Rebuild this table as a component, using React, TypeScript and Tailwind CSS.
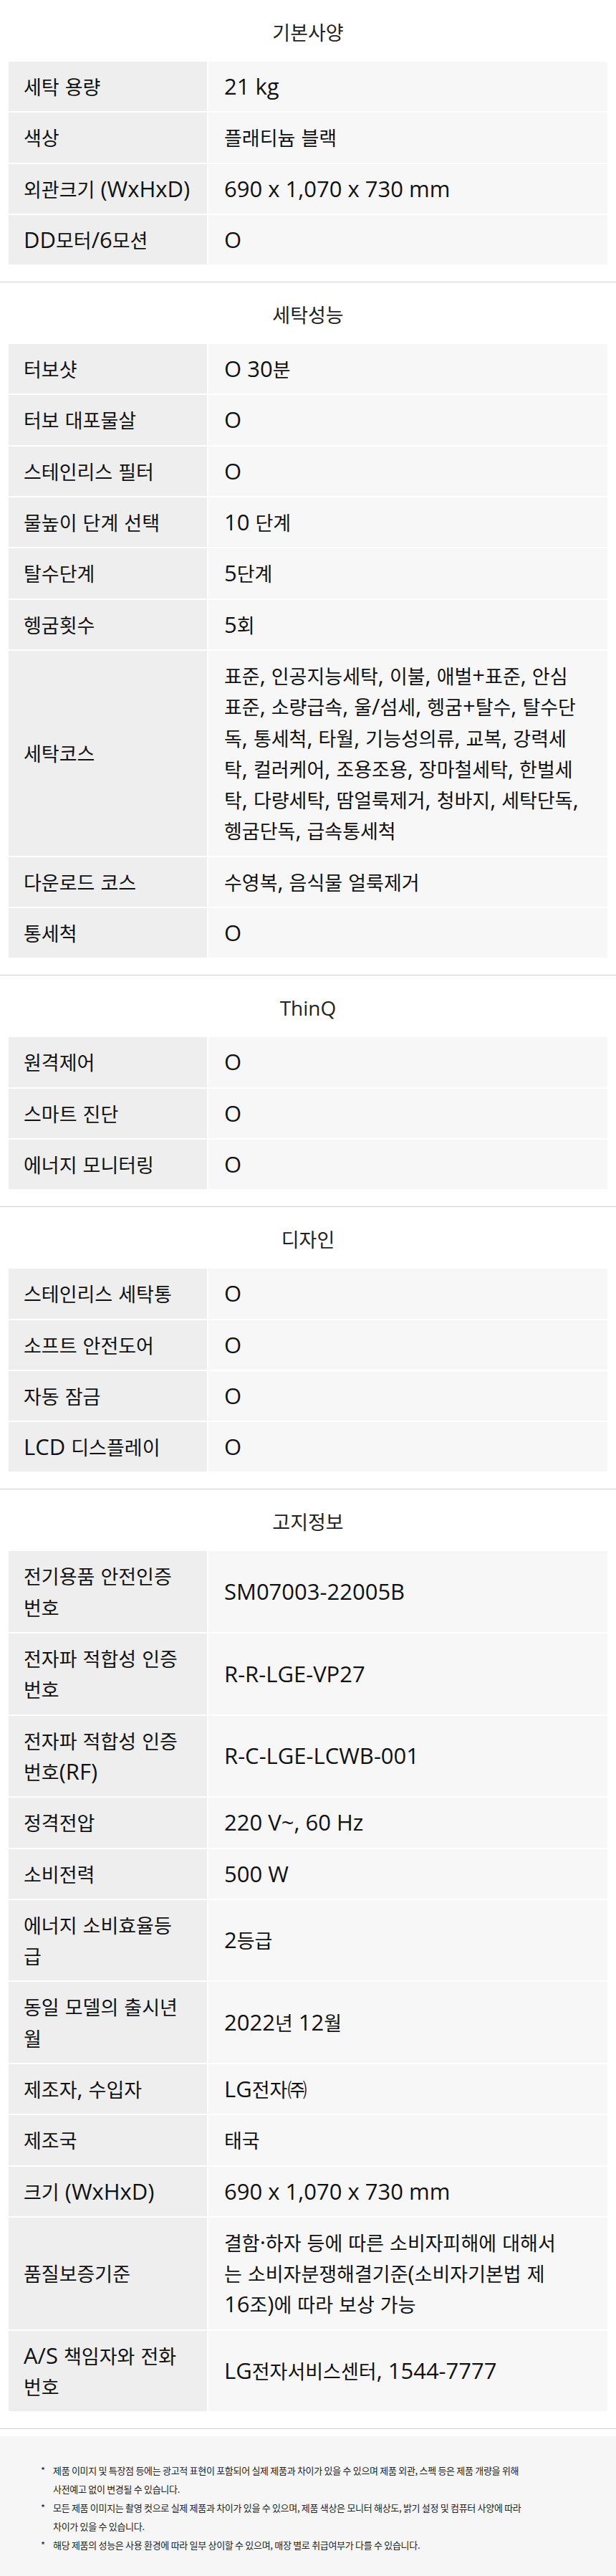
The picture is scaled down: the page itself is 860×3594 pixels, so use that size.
import React from 'react'

type Row = { label: string; value: string }
type Section = { title: string; rows: Row[] }

// hangul runs get a smaller size than latin runs, as in the source page's font mix
const HANGUL = /([\u1100-\u11FF\u3130-\u318F\u3200-\u32FF\uAC00-\uD7AF]+)/

const sections: Section[] = [
  {
    title: '기본사양',
    rows: [
      { label: '세탁 용량', value: '21 kg' },
      { label: '색상', value: '플래티늄 블랙' },
      { label: '외관크기 (WxHxD)', value: '690 x 1,070 x 730 mm' },
      { label: 'DD모터/6모션', value: 'O' },
    ],
  },
  {
    title: '세탁성능',
    rows: [
      { label: '터보샷', value: 'O 30분' },
      { label: '터보 대포물살', value: 'O' },
      { label: '스테인리스 필터', value: 'O' },
      { label: '물높이 단계 선택', value: '10 단계' },
      { label: '탈수단계', value: '5단계' },
      { label: '헹굼횟수', value: '5회' },
      {
        label: '세탁코스',
        value:
          '표준, 인공지능세탁, 이불, 애벌+표준, 안심\n표준, 소량급속, 울/섬세, 헹굼+탈수, 탈수단\n독, 통세척, 타월, 기능성의류, 교복, 강력세\n탁, 컬러케어, 조용조용, 장마철세탁, 한벌세\n탁, 다량세탁, 땀얼룩제거, 청바지, 세탁단독,\n헹굼단독, 급속통세척',
      },
      { label: '다운로드 코스', value: '수영복, 음식물 얼룩제거' },
      { label: '통세척', value: 'O' },
    ],
  },
  {
    title: 'ThinQ',
    rows: [
      { label: '원격제어', value: 'O' },
      { label: '스마트 진단', value: 'O' },
      { label: '에너지 모니터링', value: 'O' },
    ],
  },
  {
    title: '디자인',
    rows: [
      { label: '스테인리스 세탁통', value: 'O' },
      { label: '소프트 안전도어', value: 'O' },
      { label: '자동 잠금', value: 'O' },
      { label: 'LCD 디스플레이', value: 'O' },
    ],
  },
  {
    title: '고지정보',
    rows: [
      { label: '전기용품 안전인증\n번호', value: 'SM07003-22005B' },
      { label: '전자파 적합성 인증\n번호', value: 'R-R-LGE-VP27' },
      { label: '전자파 적합성 인증\n번호(RF)', value: 'R-C-LGE-LCWB-001' },
      { label: '정격전압', value: '220 V~, 60 Hz' },
      { label: '소비전력', value: '500 W' },
      { label: '에너지 소비효율등\n급', value: '2등급' },
      { label: '동일 모델의 출시년\n월', value: '2022년 12월' },
      { label: '제조자, 수입자', value: 'LG전자㈜' },
      { label: '제조국', value: '태국' },
      { label: '크기 (WxHxD)', value: '690 x 1,070 x 730 mm' },
      {
        label: '품질보증기준',
        value:
          '결함·하자 등에 따른 소비자피해에 대해서\n는 소비자분쟁해결기준(소비자기본법 제\n16조)에 따라 보상 가능',
      },
      { label: 'A/S 책임자와 전화\n번호', value: 'LG전자서비스센터, 1544-7777' },
    ],
  },
]

const notes: string[][] = [
  [
    '제품 이미지 및 특장점 등에는 광고적 표현이 포함되어 실제 제품과 차이가 있을 수 있으며 제품 외관, 스펙 등은 제품 개량을 위해',
    '사전예고 없이 변경될 수 있습니다.',
  ],
  [
    '모든 제품 이미지는 촬영 컷으로 실제 제품과 차이가 있을 수 있으며, 제품 색상은 모니터 해상도, 밝기 설정 및 컴퓨터 사양에 따라',
    '차이가 있을 수 있습니다.',
  ],
  ['해당 제품의 성능은 사용 환경에 따라 일부 상이할 수 있으며, 매장 별로 취급여부가 다를 수 있습니다.'],
]

// hangul spans keep a short line-height so the latin strut alone sets the line box
const Mixed = ({ text }: { text: string }) => {
  const parts = text.split(HANGUL)
  return (
    <>
      {parts.map((part, i) =>
        part === '' ? null : i % 2 === 1 ? (
          <span key={i} className="text-[27px] leading-[28px]">
            {part}
          </span>
        ) : (
          <span key={i}>{part}</span>
        ),
      )}
    </>
  )
}

const Lines = ({ text }: { text: string }) => (
  <>
    {text.split('\n').map((line, i) => (
      <div key={i} className="h-[43.3px] whitespace-nowrap">
        <Mixed text={line} />
      </div>
    ))}
  </>
)

const SpecSection = ({ section }: { section: Section }) => (
  <section className="border-b border-[#d2d2d2] px-[10px] pt-[24px] pb-[22px]">
    <h2 className="h-[43px] text-center text-[28px] leading-[43px] font-normal text-[#222]">
      <Mixed text={section.title} />
    </h2>
    <table className="mt-[17px] w-full table-fixed border-separate border-spacing-[2px]">
      <tbody>
        {section.rows.map((row) => (
          <tr key={row.label}>
            <td className="w-[277px] bg-[#eeeeee] py-[13px] pl-[21px] pr-[8px] align-middle text-[31px] leading-[43.3px]">
              <Lines text={row.label} />
            </td>
            <td className="bg-[#f7f7f7] py-[13px] pl-[22px] pr-[10px] align-middle text-[31px] leading-[43.3px]">
              <Lines text={row.value} />
            </td>
          </tr>
        ))}
      </tbody>
    </table>
  </section>
)

export default function App() {
  return (
    <div className="w-[860px] bg-white font-['Open_Sans','Noto_Sans_CJK_KR',sans-serif] text-[#111]">
      {sections.map((s) => (
        <SpecSection key={s.title} section={s} />
      ))}
      <div className="mt-[10px] h-[200px] bg-[#f6f6f6] pl-[57px] pt-[35px] font-['Noto_Sans_CJK_KR',sans-serif] text-[13px] leading-[26px] tracking-[-0.3px] text-[#222]">
        {notes.map((lines, i) => (
          <div key={i} className="flex">
            <span className="w-[17px] shrink-0">*</span>
            <div>
              {lines.map((l, j) => (
                <div key={j} className="h-[26px] whitespace-nowrap">
                  {l}
                </div>
              ))}
            </div>
          </div>
        ))}
      </div>
    </div>
  )
}
